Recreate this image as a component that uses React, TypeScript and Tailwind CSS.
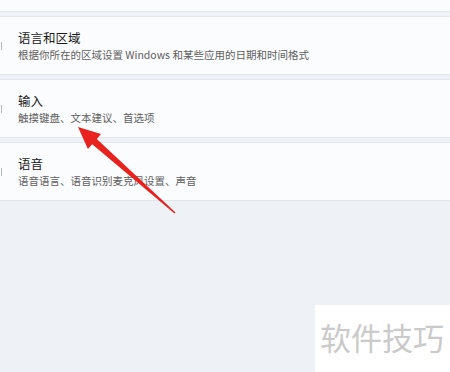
import React from "react";

const items = [
  { title: "语言和区域", desc: "根据你所在的区域设置 Windows 和某些应用的日期和时间格式" },
  { title: "输入", desc: "触摸键盘、文本建议、首选项" },
  { title: "语音", desc: "语音语言、语音识别麦克风设置、声音" },
];

const font = { fontFamily: '"Noto Sans CJK SC", "Noto Sans", sans-serif' };

const Arrow = () => (
  <svg className="absolute left-0 top-0 pointer-events-none" width="450" height="372" viewBox="0 0 450 372">
    <polygon points="78,127 101,134 96.8,139 175.5,212.5 174.5,213.5 92.2,144.2 87.9,149.1" fill="#e8231f" />
  </svg>
);

const App = () => {
  return (
    <div className="relative w-[450px] h-[372px] overflow-hidden bg-[#eef1f5]" style={font}>
      <div className="flex flex-col gap-1">
        <div className="h-[12px] bg-[#fbfcfd] border-b border-[#e3e7eb]" />
        {items.map((it) => (
          <div
            key={it.title}
            className="h-[59px] flex items-center bg-[#fbfcfd] border-y border-[#e3e7eb]"
          >
            <div className="ml-[-14px] w-[16px] h-[8px] border-r border-[#b5b8bb] shrink-0" />
            <div className="ml-4 flex flex-col">
              <div className="text-[12.5px] leading-[18px] text-[#1b1b1b]">{it.title}</div>
              <div className="text-[10.5px] leading-[15px] text-[#606060]">{it.desc}</div>
            </div>
          </div>
        ))}
      </div>
      <Arrow />
      <div className="absolute left-[315px] top-[305px] right-0 bottom-0 bg-white flex items-start">
        <span className="ml-[5px] mt-[14px] text-[31px] leading-[36px] text-[#cacaca]">软件技巧</span>
      </div>
    </div>
  );
};

export default App;
